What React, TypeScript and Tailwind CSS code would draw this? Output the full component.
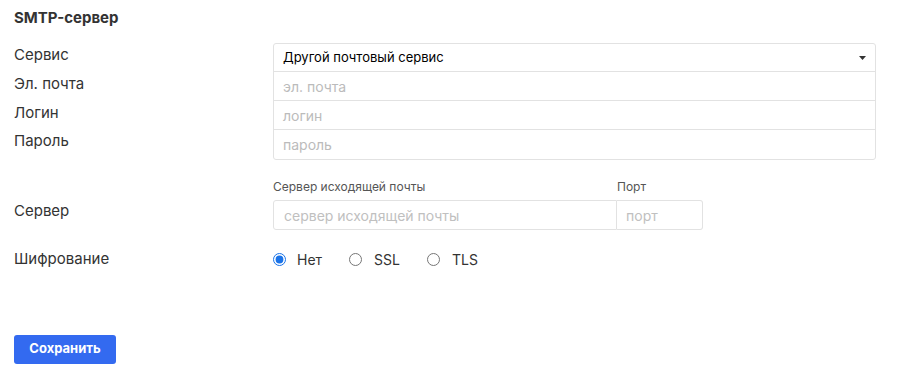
import React from "react";

const labelCls = "text-[15px] text-[#333]";

function Row({ label, children }: { label: string; children?: React.ReactNode }) {
  return (
    <div className="flex items-center">
      <div className={`w-[259px] ${labelCls}`}>{label}</div>
      <div className="flex-1">{children}</div>
    </div>
  );
}

export default function App() {
  return (
    <div className="h-[388px] w-[922px] bg-white pl-[14px] pr-[46px] pt-[9px] font-['Inter',sans-serif]">
      <h2 className="text-[15px] font-bold text-[#333] leading-[18px]">SMTP-сервер</h2>

      <div className="mt-[16px] flex">
        <div className="flex w-[259px] flex-col pt-[1px]">
          <div className={`${labelCls} h-[29px] leading-[22px]`}>Сервис</div>
          <div className={`${labelCls} h-[29px] leading-[22px]`}>Эл. почта</div>
          <div className={`${labelCls} h-[28px] leading-[22px]`}>Логин</div>
          <div className={`${labelCls} h-[29px] leading-[22px]`}>Пароль</div>
        </div>
        <div className="flex-1 rounded-[3px] border border-[#e2e2e2] text-[14px]">
          <div className="flex h-[28px] items-center justify-between border-b border-[#e2e2e2] pl-[9px] pr-[9px] text-[13px] text-black">
            <span>Другой почтовый сервис</span>
            <svg width="7" height="4" viewBox="0 0 7 4">
              <path d="M0 0h7L3.5 4z" fill="#333" />
            </svg>
          </div>
          <div className="flex h-[29px] items-center border-b border-[#e2e2e2] pl-[9px] text-[#bbb]">эл. почта</div>
          <div className="flex h-[29px] items-center border-b border-[#e2e2e2] pl-[9px] text-[#bbb]">логин</div>
          <div className="flex h-[29px] items-center pl-[9px] text-[#bbb]">пароль</div>
        </div>
      </div>

      <div className="mt-[19px] flex items-end">
        <div className={`w-[259px] pb-[8px] ${labelCls}`}>Сервер</div>
        <div className="flex">
          <div className="flex w-[344px] flex-col">
            <span className="mb-[6px] text-[12px] leading-[15px] text-[#555]">Сервер исходящей почты</span>
            <div className="flex h-[30px] items-center rounded-l-[3px] border border-[#e2e2e2] pl-[10px] text-[14px] text-[#c0c0c0]">
              сервер исходящей почты
            </div>
          </div>
          <div className="flex w-[86px] flex-col">
            <span className="mb-[6px] text-[12px] leading-[15px] text-[#555]">Порт</span>
            <div className="flex h-[30px] items-center rounded-r-[3px] border border-l-0 border-[#e2e2e2] pl-[9px] text-[14px] text-[#c0c0c0]">
              порт
            </div>
          </div>
        </div>
      </div>

      <div className="mt-[18px]">
        <Row label="Шифрование">
          <div className="flex items-center text-[14px] text-[#333]">
            <label className="flex items-center">
              <input type="radio" name="enc" defaultChecked className="m-0 h-[13px] w-[13px] accent-[#1a73e8]" />
              <span className="ml-[11px]">Нет</span>
            </label>
            <label className="ml-[27px] flex items-center">
              <input type="radio" name="enc" className="m-0 h-[13px] w-[13px]" />
              <span className="ml-[12px]">SSL</span>
            </label>
            <label className="ml-[27px] flex items-center">
              <input type="radio" name="enc" className="m-0 h-[13px] w-[13px]" />
              <span className="ml-[12px]">TLS</span>
            </label>
          </div>
        </Row>
      </div>

      <button className="mt-[64px] h-[29px] w-[102px] rounded-[3px] bg-[#336af0] text-[13px] font-bold text-white">
        Сохранить
      </button>
    </div>
  );
}
